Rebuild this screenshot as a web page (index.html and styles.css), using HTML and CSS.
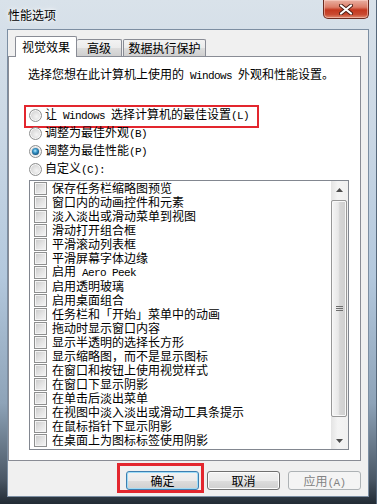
FILE: index.html
```html
<!DOCTYPE html>
<html lang="zh-CN">
<head>
  <meta charset="UTF-8">
  <meta name="viewport" content="width=device-width, initial-scale=1.0">
  <title>性能选项</title>
  <link rel="stylesheet" href="styles.css">
</head>
<body>
  <div class="window">
    <!-- 标题栏 -->
    <div class="titlebar">
      <span class="title">性能选项</span>
      <button class="close" title="关闭">
        <svg width="14" height="11" viewBox="0 0 14 11">
          <path d="M2 1.5 L12 9.5 M12 1.5 L2 9.5" stroke="#4a1d14" stroke-width="4" stroke-linecap="round"/>
          <path d="M2 1.5 L12 9.5 M12 1.5 L2 9.5" stroke="#fff" stroke-width="2.2" stroke-linecap="round"/>
        </svg>
      </button>
    </div>

    <div class="client">
      <div class="tabs">
        <div class="tab active">视觉效果</div>
        <div class="tab">高级</div>
        <div class="tab">数据执行保护</div>
      </div>

      <div class="panel">
        <p class="intro">选择您想在此计算机上使用的<span class="en"> Windows </span>外观和性能设置。</p>

        <div class="options">
          <div class="radio-row marked"><span class="radio"></span><span class="label">让<span class="en"> Windows </span>选择计算机的最佳设置<span class="en">(L)</span></span></div>
          <div class="radio-row"><span class="radio"></span><span class="label">调整为最佳外观<span class="en">(B)</span></span></div>
          <div class="radio-row"><span class="radio checked"></span><span class="label">调整为最佳性能<span class="en">(P)</span></span></div>
          <div class="radio-row"><span class="radio"></span><span class="label">自定义<span class="en">(C):</span></span></div>
        </div>

        <div class="listbox">
          <ul class="items">
            <li><span class="check"></span>保存任务栏缩略图预览</li>
            <li><span class="check"></span>窗口内的动画控件和元素</li>
            <li><span class="check"></span>淡入淡出或滑动菜单到视图</li>
            <li><span class="check"></span>滑动打开组合框</li>
            <li><span class="check"></span>平滑滚动列表框</li>
            <li><span class="check"></span>平滑屏幕字体边缘</li>
            <li><span class="check"></span><span class="label">启用<span class="en"> Aero Peek</span></span></li>
            <li><span class="check"></span>启用透明玻璃</li>
            <li><span class="check"></span>启用桌面组合</li>
            <li><span class="check"></span>任务栏和「开始」菜单中的动画</li>
            <li><span class="check"></span>拖动时显示窗口内容</li>
            <li><span class="check"></span>显示半透明的选择长方形</li>
            <li><span class="check"></span>显示缩略图，而不是显示图标</li>
            <li><span class="check"></span>在窗口和按钮上使用视觉样式</li>
            <li><span class="check"></span>在窗口下显示阴影</li>
            <li><span class="check"></span>在单击后淡出菜单</li>
            <li><span class="check"></span>在视图中淡入淡出或滑动工具条提示</li>
            <li><span class="check"></span>在鼠标指针下显示阴影</li>
            <li><span class="check"></span>在桌面上为图标标签使用阴影</li>
          </ul>
          <div class="scrollbar">
            <div class="arrow">
              <svg width="7" height="4" viewBox="0 0 7 4"><path d="M0 4 L3.5 0 L7 4 Z" fill="#4d4d4d"/></svg>
            </div>
            <div class="thumb">
              <svg width="7" height="6" viewBox="0 0 7 6"><path d="M0 0.5 H7 M0 2.5 H7 M0 4.5 H7" stroke="#6e6e6e" stroke-width="1"/></svg>
            </div>
            <div class="track"></div>
            <div class="arrow">
              <svg width="7" height="4" viewBox="0 0 7 4"><path d="M0 0 L3.5 4 L7 0 Z" fill="#4d4d4d"/></svg>
            </div>
          </div>
        </div>
      </div>

      <div class="buttons">
        <span class="marked-btn"><button class="btn default">确定</button></span>
        <button class="btn">取消</button>
        <button class="btn disabled">应用<span class="en">(A)</span></button>
      </div>
    </div>
  </div>
</body>
</html>
```

FILE: styles.css
```css
* {
  margin: 0;
  padding: 0;
  box-sizing: border-box;
}

body {
  font-family: "Noto Sans CJK SC", "Noto Sans", sans-serif;
  font-size: 12px;
  color: #000;
  background-color: #28323d;
}

.en {
  font-family: "Liberation Mono", monospace;
  font-size: 11px;
  letter-spacing: -0.6px;
  white-space: pre;
}

.label {
  line-height: 14px;
  white-space: nowrap;
}

.window {
  width: 377px;
  height: 504px;
  display: flex;
  flex-direction: column;
  background: linear-gradient(to bottom, #d9e2ea 0, #cbd8e5 25%, #b3c8dd 55%, #8ea3b8 80%, #4b5866 95%, #222b34 100%);
  border-right: 1px solid #55677a;
}

/* 标题栏 */
.titlebar {
  height: 29px;
  display: flex;
  justify-content: space-between;
  align-items: flex-start;
  padding-left: 8px;
  padding-right: 7px;
}

.title {
  align-self: center;
  line-height: 14px;
  text-shadow: 0 0 6px #fff, 0 0 3px #fff;
}

.close {
  width: 46px;
  height: 19px;
  border: 1px solid #6b2b20;
  border-top: none;
  border-radius: 0 0 5px 5px;
  background: linear-gradient(to bottom, #e9b0a2 0, #dc7d68 40%, #c4381f 55%, #c94a31 80%, #de8a70 100%);
  box-shadow: inset 0 0 0 1px rgba(255, 220, 210, 0.5);
  display: flex;
  align-items: center;
  justify-content: center;
}

/* 客户区 */
.client {
  height: 468px;
  margin: 0 0 0 7px;
  width: 362px;
  background-color: #f0f0f0;
  border: 1px solid #7c8ea2;
  display: flex;
  flex-direction: column;
}

.tabs {
  display: flex;
  align-items: flex-end;
  height: 21px;
  margin-top: 6px;
  margin-bottom: -1px;
  position: relative;
  z-index: 1;
}

.tab {
  height: 17px;
  margin-bottom: 1px;
  border: 1px solid #898c95;
  border-bottom: none;
  border-radius: 2px 2px 0 0;
  background: linear-gradient(to bottom, #f3f3f3 0, #ebebeb 50%, #dddddd 51%, #cfcfcf 100%);
  line-height: 15px;
  text-align: center;
}

.tab.active {
  width: 62px;
  height: 21px;
  margin-left: 7px;
  margin-bottom: 0;
  background: #fff;
  line-height: 19px;
}

.tab:nth-child(2) {
  width: 45px;
  border-left: none;
}

.tab:nth-child(3) {
  width: 83px;
  margin-left: 1px;
}

.panel {
  width: 353px;
  height: 405px;
  background-color: #fff;
  border: 1px solid #898c95;
}

.intro {
  margin: 10px 0 0 19px;
  line-height: 14px;
}

.options {
  margin: 23px 0 0 20px;
}

.radio-row {
  height: 18px;
  display: flex;
  align-items: center;
  gap: 3px;
  position: relative;
}

.marked::after {
  content: "";
  position: absolute;
  left: -5px;
  top: -1px;
  width: 231px;
  height: 19px;
  border: 2px solid #e3262e;
}

.radio {
  width: 13px;
  height: 13px;
  flex: none;
  border-radius: 50%;
  border: 1px solid #8e8f8f;
  background: radial-gradient(circle at 60% 60%, #f4f4f4 0, #e0e0e0 45%, #c8c8c8 100%);
  box-shadow: inset 0 0 0 1px #f8f8f8;
  display: flex;
  align-items: center;
  justify-content: center;
}

.radio.checked::before {
  content: "";
  width: 7px;
  height: 7px;
  border-radius: 50%;
  background: radial-gradient(circle at 45% 40%, #b9ecff 0, #3a97c9 35%, #0d4f7c 75%, #0a3a5e 100%);
}

.listbox {
  margin: 2px 0 0 20px;
  width: 320px;
  height: 270px;
  border: 1px solid #828790;
  display: flex;
}

.items {
  flex: 1;
  list-style: none;
  padding-left: 4px;
}

.items li {
  height: 14px;
  display: flex;
  align-items: center;
  gap: 5px;
  line-height: 14px;
  white-space: nowrap;
}

.check {
  width: 13px;
  height: 13px;
  flex: none;
  border: 1px solid #8e8f8f;
  box-shadow: inset 0 0 0 1px #f4f4f4;
  background: linear-gradient(135deg, #c9c9c9 0, #e2e2e2 50%, #f6f6f6 100%);
}

.scrollbar {
  width: 17px;
  display: flex;
  flex-direction: column;
  background: linear-gradient(to right, #e4e4e4 0, #f4f4f4 40%, #f0f0f0 100%);
}

.arrow {
  height: 17px;
  display: flex;
  align-items: center;
  justify-content: center;
}

.thumb {
  height: 217px;
  margin: 2px 1px 0 0;
  border: 1px solid #979797;
  border-radius: 2px;
  background: linear-gradient(to right, #f5f5f5 0, #e8e8e8 45%, #d6d6d6 55%, #cfcfcf 100%);
  box-shadow: inset 0 0 0 1px #f8f8f8;
  display: flex;
  align-items: center;
  justify-content: center;
}

.track {
  flex: 1;
}

/* 按钮 */
.buttons {
  margin-top: 10px;
  display: flex;
  justify-content: flex-end;
  gap: 8px;
  padding-right: 7px;
}

.btn {
  width: 73px;
  height: 19px;
  font-family: inherit;
  font-size: 12px;
  line-height: 17px;
  color: #000;
  border: 1px solid #707070;
  border-radius: 3px;
  background: linear-gradient(to bottom, #f2f2f2 0, #ebebeb 50%, #dddddd 51%, #cfcfcf 100%);
  box-shadow: inset 0 0 0 1px #fcfcfc;
}

.btn.default {
  border-color: #3c7fb1;
  box-shadow: inset 0 0 0 1px #9fdcf7;
}

.btn.disabled {
  color: #838383;
  border-color: #adb2b5;
  background: #f4f4f4;
  box-shadow: none;
}

.marked-btn {
  position: relative;
  display: flex;
}

.marked-btn::after {
  content: "";
  position: absolute;
  left: -9px;
  top: -8px;
  right: -5px;
  bottom: -3px;
  border: 3px solid #e3262e;
}
```
